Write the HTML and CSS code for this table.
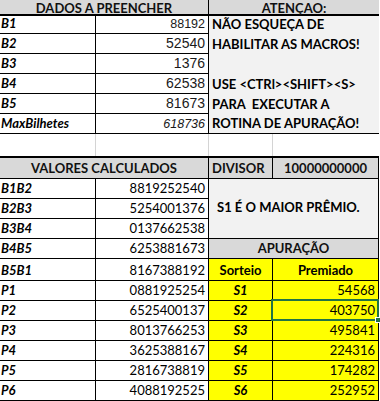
FILE: index.html
```html
<!DOCTYPE html>
<html lang="pt">
<head>
<meta charset="utf-8">
<title>Apuração</title>
<link rel="stylesheet" href="styles.css">
</head>
<body>
<div class="sheet">
  <div class="c hd ab center thickb top">DADOS A PREENCHER</div>
  <div class="c hd cd center thickb noright top">ATENÇAO:</div>

  <div class="c lb">B1</div><div class="c num arial small">88192</div><div class="c note cd noline">NÃO ESQUEÇA DE</div>
  <div class="c lb">B2</div><div class="c num arial">52540</div><div class="c note cd noline">HABILITAR AS MACROS!</div>
  <div class="c lb">B3</div><div class="c num arial">1376</div><div class="c note cd noline"></div>
  <div class="c lb">B4</div><div class="c num arial">62538</div><div class="c note cd noline">USE &lt;CTRl&gt;&lt;SHIFT&gt;&lt;S&gt;</div>
  <div class="c lb">B5</div><div class="c num arial">81673</div><div class="c note cd noline">PARA&nbsp; EXECUTAR A</div>
  <div class="c lb">MaxBilhetes</div><div class="c num arial small it">618736</div><div class="c note cd">ROTINA DE APURAÇÃO!</div>

  <div class="c blank"></div><div class="c blank"></div><div class="c blank"></div><div class="c blank last"></div>

  <div class="c hd ab center topthick">VALORES CALCULADOS</div>
  <div class="c hd bold topthick">DIVISOR</div>
  <div class="c hd bold center topthick">10000000000</div>

  <div class="c note big cd">S1 É O MAIOR PRÊMIO.</div>

  <div class="c lb">B1B2</div><div class="c num">8819252540</div>
  <div class="c lb">B2B3</div><div class="c num">5254001376</div>
  <div class="c lb">B3B4</div><div class="c num">0137662538</div>
  <div class="c lb">B4B5</div><div class="c num">6253881673</div><div class="c hd cd center">APURAÇÃO</div>
  <div class="c lb">B5B1</div><div class="c num">8167388192</div><div class="c yl bold center">Sorteio</div><div class="c yl bold center">Premiado</div>
  <div class="c lb">P1</div><div class="c num">0881925254</div><div class="c yl lbc">S1</div><div class="c yl num">54568</div>
  <div class="c lb">P2</div><div class="c num">6525400137</div><div class="c yl lbc">S2</div><div class="c yl num selcell">403750<span class="sel"><span class="handle"></span></span></div>
  <div class="c lb">P3</div><div class="c num">8013766253</div><div class="c yl lbc">S3</div><div class="c yl num">495841</div>
  <div class="c lb">P4</div><div class="c num">3625388167</div><div class="c yl lbc">S4</div><div class="c yl num">224316</div>
  <div class="c lb">P5</div><div class="c num">2816738819</div><div class="c yl lbc">S5</div><div class="c yl num">174282</div>
  <div class="c lb">P6</div><div class="c num">4088192525</div><div class="c yl lbc">S6</div><div class="c yl num">252952</div>
</div>
</body>
</html>
```

FILE: styles.css
```css
* {
  box-sizing: border-box;
  margin: 0;
  padding: 0;
}

body {
  background: #ffffff;
  font-family: Lato, "Open Sans", sans-serif;
  color: #000000;
}

.sheet {
  display: grid;
  grid-template-columns: 96px 113px 64px 106px;
  grid-template-rows: 16px 18px repeat(5, 20px) 22px 23px repeat(4, 20px) 22px repeat(6, 20px);
  width: 379px;
}

.c {
  display: flex;
  align-items: flex-end;
  padding: 0 3px 3px;
  font-size: 13px;
  line-height: 1;
  white-space: nowrap;
  border-right: 1px solid #000000;
  border-bottom: 1px solid #000000;
  background: #ffffff;
}

.ab { grid-column: span 2; }
.cd { grid-column: span 2; }

.hd {
  background: #d9d9d9;
  font-weight: 700;
  color: #111111;
}

.top {
  align-items: center;
  padding-bottom: 0;
  padding-top: 1px;
  line-height: 12px;
}

.center { justify-content: center; }
.bold { font-weight: 700; }

.thickb { border-bottom-width: 2px; }
.topthick { border-top: 2px solid #000000; }
.noright { border-right: none; }

.lb {
  font-weight: 700;
  font-style: italic;
  padding-left: 1px;
}

.lbc {
  font-weight: 700;
  font-style: italic;
  justify-content: center;
}

.num {
  justify-content: flex-end;
  padding-right: 3px;
}

.arial {
  font-family: "Liberation Sans", Arial, sans-serif;
  font-size: 14px;
  color: #1a1a1a;
}

.arial.small { font-size: 12.5px; }
.it { font-style: italic; }

.note {
  background: #f2f2f2;
  font-weight: 700;
  border-right: none;
}

.noline { border-bottom: none; }

.big {
  grid-column: 3 / 5;
  grid-row: 10 / 13;
  align-items: center;
  padding-left: 8px;
  border-right: 1px solid #000000;
  font-size: 13px;
}

.blank {
  border-bottom: none;
  border-right: 1px solid #d4d4d4;
}

.blank.last { border-right: none; }

.yl { background: #ffff00; }

.selcell { position: relative; }

.sel {
  position: absolute;
  top: -2px;
  left: -2px;
  right: -1px;
  bottom: -1px;
  border: 2px solid #217346;
}

.handle {
  position: absolute;
  right: -4px;
  bottom: -4px;
  width: 6px;
  height: 6px;
  background: #217346;
  border: 1px solid #ffffff;
}
```
